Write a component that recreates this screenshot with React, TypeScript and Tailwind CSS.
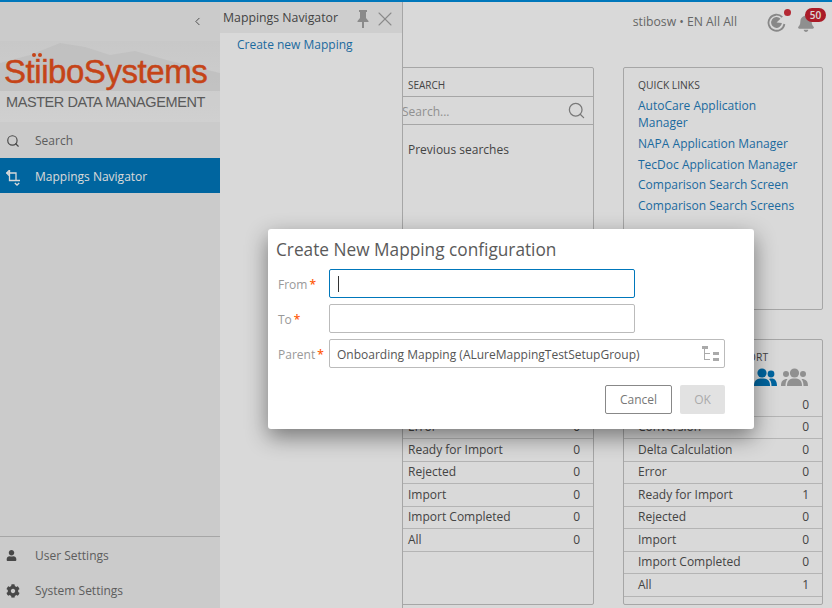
import React from "react";
import { ChevronLeft, Search, X } from "lucide-react";
import { FaBell, FaCog, FaUser } from "react-icons/fa";

const leftRows: [string, number][] = [
  ["Conversion", 0],
  ["Delta Calculation", 0],
  ["Error", 0],
  ["Ready for Import", 0],
  ["Rejected", 0],
  ["Import", 0],
  ["Import Completed", 0],
  ["All", 0],
];

const rightRows: [string, number][] = [
  ["Validation", 0],
  ["Conversion", 0],
  ["Delta Calculation", 0],
  ["Error", 0],
  ["Ready for Import", 1],
  ["Rejected", 0],
  ["Import", 0],
  ["Import Completed", 0],
  ["All", 1],
];

const quickLinks = [
  { label: "AutoCare Application Manager", className: "w-[135px] leading-[17px] mb-[4px]" },
  { label: "NAPA Application Manager", className: "whitespace-nowrap leading-[17px] mb-[4px]" },
  { label: "TecDoc Application Manager", className: "whitespace-nowrap leading-[17px] mb-[3px]" },
  { label: "Comparison Search Screen", className: "whitespace-nowrap leading-[17px] mb-[4px]" },
  { label: "Comparison Search Screens", className: "whitespace-nowrap leading-[17px]" },
];

const StatusRows: React.FC<{ rows: [string, number][] }> = ({ rows }) => (
  <div>
    {rows.map(([name, count]) => (
      <div
        key={name}
        className="h-[22.5px] border-b border-[#d4d4d4] flex items-center justify-between pl-[14px] pr-[13px] text-[12px] text-[#505050]"
      >
        <span>{name}</span>
        <span>{count}</span>
      </div>
    ))}
  </div>
);

const SideItem: React.FC<{
  icon: React.ReactNode;
  label: string;
  active?: boolean;
  height: string;
}> = ({ icon, label, active, height }) => (
  <div
    className={`flex items-center text-[12px] ${height} ${
      active ? "bg-[#0077bb] text-white font-medium" : "text-[#6e6e6e]"
    }`}
  >
    <span className={`w-[35px] pl-[6px] flex justify-start ${active ? "text-white" : "text-[#555555]"}`}>{icon}</span>
    <span>{label}</span>
  </div>
);

const FormRow: React.FC<{ label: string; children: React.ReactNode }> = ({ label, children }) => (
  <div className="flex items-center h-[29px]">
    <label className="w-[53px] pl-[2px] pt-[2px] text-[12px] text-[#999999]">
      {label}
      <span className="text-[#ff5a0a] ml-[2px] font-semibold">*</span>
    </label>
    {children}
  </div>
);

export default function App() {
  return (
    <div className="relative w-[832px] h-[608px] overflow-hidden bg-white font-['Open_Sans',sans-serif] border-t-2 border-[#0077bb]">
      <div className="flex h-full">
        {/* left nav */}
        <aside className="w-[220px] shrink-0 bg-[#efefef] flex flex-col">
          <div className="h-[39px] flex items-center justify-end pr-[16px] text-[#444444]">
            <ChevronLeft size={13} strokeWidth={1.6} />
          </div>
          <div className="relative h-[81px] bg-gradient-to-b from-[#ececec] to-[#f5f5f5] overflow-hidden">
            <svg className="absolute inset-0" width="220" height="81" viewBox="0 0 220 81">
              <path d="M0 22 L30 14 L60 2 L85 6 L110 14 L135 10 L170 20 L220 32 V50 H0 Z" fill="#dfdfdf" opacity="0.75" />
            </svg>
            <div className="relative pl-[4px]">
              <div className="absolute left-[32px] top-[12px] flex gap-[2px]">
                <span className="w-[4px] h-[4px] rounded-full bg-[#e8501c]" />
                <span className="w-[4px] h-[4px] rounded-full bg-[#e8501c]" />
              </div>
              <div className="font-['Liberation_Sans',sans-serif] text-[33px] leading-[33px] pt-[14px] tracking-[-0.45px] text-[#e8501c] [-webkit-text-stroke:0.5px_#e8501c] whitespace-nowrap">
                StiiboSystems
              </div>
              <div className="font-['Liberation_Sans',sans-serif] text-[14.5px] leading-[18px] mt-[5px] pl-[2px] tracking-[-0.42px] text-[#6a6a6a] whitespace-nowrap">
                MASTER DATA MANAGEMENT
              </div>
            </div>
          </div>
          <SideItem icon={<Search size={14} strokeWidth={2} />} label="Search" height="h-[36px] pt-[2px]" />
          <SideItem
            active
            height="h-[35px] pt-[2px]"
            label="Mappings Navigator"
            icon={
              <svg width="14" height="18" viewBox="0 0 14 18" fill="none" stroke="currentColor" strokeWidth="1.3">
                <path d="M0 5 H10 V13 M3 2.5 L0.8 5 L3 7.5" />
                <path d="M3.5 2 V12.5 H14 M8.8 15 L11 17 L13.2 15" />
              </svg>
            }
          />
          <div className="mt-auto border-t border-[#c3c3c3]">
            <SideItem icon={<FaUser size={11} />} label="User Settings" height="h-[36px] pt-[1px]" />
            <SideItem icon={<FaCog size={14} />} label="System Settings" height="h-[35px]" />
          </div>
        </aside>

        {/* main content */}
        <main className="flex-1 min-w-0 flex flex-col">
          <header className="h-[39px] shrink-0 flex items-center justify-end">
            <span className="text-[12.2px] text-[#787878] mr-[30px] mt-[1px]">stibosw • EN All All</span>
            <div className="relative mr-[11px] mt-[1px]">
              <svg width="19" height="19" viewBox="0 0 19 19" fill="none">
                <path d="M15.3 4.2 A8 8 0 1 0 17.4 11" stroke="#a0a0a0" strokeWidth="1.8" />
                <path d="M9.5 9.5 L13.5 5.8 A5.4 5.4 0 1 0 14.9 10 Z" fill="#a0a0a0" />
              </svg>
              <span className="absolute -top-[4px] -right-[5px] w-[7px] h-[7px] rounded-full bg-[#d4303d]" />
            </div>
            <div className="relative mr-[17px] text-[#a8a8a8] mt-[2px]">
              <FaBell size={18} />
              <span className="absolute -top-[6px] left-[8px] w-[21px] h-[14px] rounded-full bg-[#c8202e] text-white text-[10px] font-semibold leading-[14px] text-center">
                50
              </span>
            </div>
          </header>

          <div className="flex-1 min-h-0 pt-[26px] pl-[173px] grid grid-cols-[201px_200px] gap-x-[29px] content-start">
            <section className="h-[243px] border border-[#c4c4c4] rounded-[2px]">
              <div className="h-[29px] pl-[14px] pt-[6px] flex items-center text-[10px] text-[#505050] border-b border-[#c4c4c4]">
                SEARCH
              </div>
              <div className="h-[28px] pl-[8px] pr-[7px] pt-[2px] flex items-center justify-between text-[12px] text-[#aaaaaa] border-b border-[#c4c4c4]">
                <span>Search...</span>
                <Search size={19} strokeWidth={1.6} className="text-[#8f8f8f] -mt-[2px]" />
              </div>
              <div className="pl-[14px] pt-[16px] text-[12px] text-[#505050]">Previous searches</div>
            </section>

            <section className="h-[243px] border border-[#c4c4c4] rounded-[2px] pl-[14px] pr-[8px] pt-[10px]">
              <h3 className="text-[10.3px] leading-[14px] text-[#505050] mb-[5px]">QUICK LINKS</h3>
              <ul className="text-[12px] text-[#1f7dbb]">
                {quickLinks.map((link) => (
                  <li key={link.label} className={link.className}>
                    {link.label}
                  </li>
                ))}
              </ul>
            </section>

            <section className="h-[266px] mt-[29px] border border-[#c4c4c4] rounded-[2px]">
              <h3 className="h-[31.5px] pl-[14px] pt-[10px] text-[10.3px] leading-[14px] text-[#505050]">IMPORT</h3>
              <StatusRows rows={leftRows} />
            </section>

            <section className="h-[266px] mt-[29px] border border-[#c4c4c4] rounded-[2px]">
              <h3 className="pl-[14px] pt-[10px] text-[10.3px] leading-[14px] tracking-[0.2px] text-[#505050] whitespace-nowrap">
                MAPPING STATUS EXPORT
              </h3>
              <div className="h-[30px] pr-[14px] pb-[4px] flex items-center justify-end gap-[4px]">
                <svg width="23" height="18" viewBox="0 0 23 18" fill="#0077bb">
                  <circle cx="8" cy="5" r="4.6" />
                  <path d="M0 18 C0 12 3 10.5 8 10.5 C13 10.5 16 12 16 18 Z" />
                  <circle cx="17" cy="6" r="3.4" />
                  <path d="M17.5 18 C17.5 14 16.5 12.5 15 11 C20 9.5 23 12 23 18 Z" />
                </svg>
                <svg width="27" height="18" viewBox="0 0 27 18" fill="#aaaaaa">
                  <circle cx="13.5" cy="5" r="4.6" />
                  <path d="M6 18 C6 12 9 10.5 13.5 10.5 C18 10.5 21 12 21 18 Z" />
                  <circle cx="5" cy="6" r="3" />
                  <circle cx="22" cy="6" r="3" />
                  <path d="M0 18 C0 13 2 11 6.5 11 C5 13 4.5 15 4.5 18 Z" />
                  <path d="M27 18 C27 13 25 11 20.5 11 C22 13 22.5 15 22.5 18 Z" />
                </svg>
              </div>
              <StatusRows rows={rightRows} />
            </section>
          </div>
        </main>
      </div>

      {/* flyout panel */}
      <div className="absolute left-[220px] top-0 bottom-0 w-[183px] bg-white border-r border-[#c4c4c4] z-10">
        <div className="h-[31px] pt-[2px] bg-[#f3f3f3] flex items-center pl-[3px] text-[12.3px] text-[#505050]">
          <span className="flex-1">Mappings Navigator</span>
          <svg width="12" height="18" viewBox="0 0 12 18" fill="#a3a3a3" className="mr-[4px]">
            <path d="M2 0 H10 V2 H9 V8 L11.5 11 V12 H7 V18 H5 V12 H0.5 V11 L3 8 V2 H2 Z" />
          </svg>
          <X size={24} strokeWidth={1.1} className="text-[#a3a3a3] mr-[5px]" />
        </div>
        <div className="pl-[17px] pt-[3px] text-[12px] text-[#1f7dbb]">Create new Mapping</div>
      </div>

      {/* scrim */}
      <div className="absolute inset-0 -top-[2px] bg-black/15 z-20" />

      {/* dialog */}
      <div className="absolute left-[268px] top-[227px] w-[486px] h-[200px] bg-white rounded-[3px] shadow-[0_8px_22px_rgba(0,0,0,0.45)] z-30 px-[8px] pt-[8px]">
        <h2 className="text-[17.25px] leading-[26px] text-[#5a5a5a] mb-[6px] whitespace-nowrap">
          Create New Mapping configuration
        </h2>
        <div className="flex flex-col gap-[6px]">
          <FormRow label="From">
            <div className="w-[306px] h-[29px] border border-[#0077bb] rounded-[2px] flex items-center pl-[8px]">
              <span className="w-px h-[16px] bg-[#333333]" />
            </div>
          </FormRow>
          <FormRow label="To">
            <div className="w-[306px] h-[29px] border border-[#bbbbbb] rounded-[2px]" />
          </FormRow>
          <FormRow label="Parent">
            <div className="w-[396px] h-[29px] border border-[#bbbbbb] rounded-[2px] flex items-center justify-between pl-[7px] pr-[5px] text-[12px] text-[#555555]">
              <span className="pt-[2px]">Onboarding Mapping (ALureMappingTestSetupGroup)</span>
              <svg width="17" height="16" viewBox="0 0 17 16" fill="#aaaaaa">
                <rect x="0" y="0" width="6" height="3" />
                <rect x="2" y="3" width="1" height="11" />
                <rect x="2" y="7" width="6" height="1" />
                <rect x="2" y="13" width="6" height="1" />
                <rect x="11" y="6" width="6" height="3" />
                <rect x="11" y="12" width="6" height="3" />
              </svg>
            </div>
          </FormRow>
        </div>
        <div className="flex justify-end gap-[8px] mt-[17px] mr-[21px]">
          <button className="w-[67px] h-[29px] border border-[#888888] rounded-[2px] text-[12px] text-[#777777]">
            Cancel
          </button>
          <button className="w-[45px] h-[29px] bg-[#e2e2e2] rounded-[2px] text-[12px] text-[#aaaaaa]">OK</button>
        </div>
      </div>
    </div>
  );
}
